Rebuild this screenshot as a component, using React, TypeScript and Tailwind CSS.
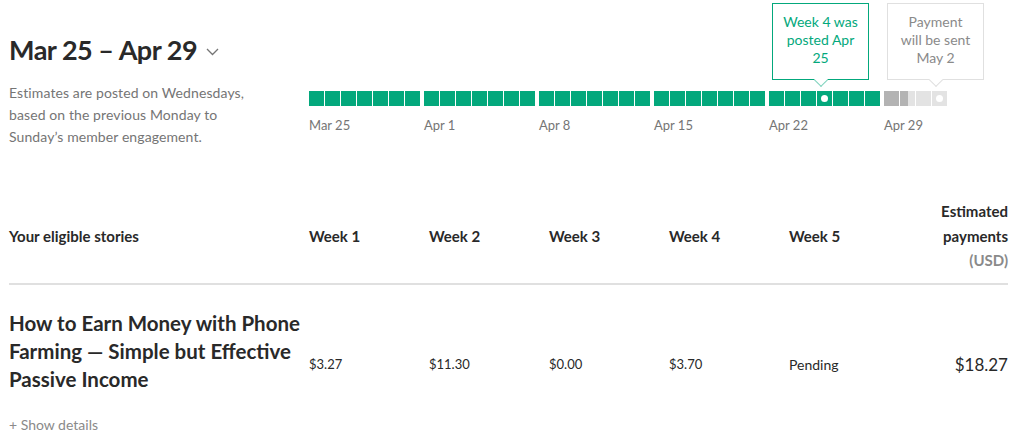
import React from "react";

const green = "bg-[#03a87c]";

type Square = { kind: "green" | "dark" | "half" | "light"; dot?: boolean };

const weeks: Square[][] = [
  Array.from({ length: 7 }, () => ({ kind: "green" as const })),
  Array.from({ length: 7 }, () => ({ kind: "green" as const })),
  Array.from({ length: 7 }, () => ({ kind: "green" as const })),
  Array.from({ length: 7 }, () => ({ kind: "green" as const })),
  Array.from({ length: 7 }, (_, i) => ({ kind: "green" as const, dot: i === 3 })),
  [
    { kind: "dark" },
    { kind: "half" },
    { kind: "light" },
    { kind: "light", dot: true },
  ],
];

const labels = ["Mar 25", "Apr 1", "Apr 8", "Apr 15", "Apr 22", "Apr 29"];

const Cell = ({ sq }: { sq: Square }) => {
  if (sq.kind === "half") {
    return (
      <div className="flex h-[15px] w-[15px]">
        <div className="w-[8px] bg-[#b3b3b3]" />
        <div className="flex-1 bg-[#e3e3e3]" />
      </div>
    );
  }
  return (
    <div
      className={
        "flex h-[15px] w-[15px] items-center justify-center " +
        (sq.kind === "green"
          ? green
          : sq.kind === "dark"
            ? "bg-[#b3b3b3]"
            : "bg-[#e3e3e3]")
      }
    >
      {sq.dot && <div className="h-[7px] w-[7px] rounded-full bg-white" />}
    </div>
  );
};

const Callout = ({
  children,
  tone,
  className,
}: {
  children: React.ReactNode;
  tone: "green" | "gray";
  className: string;
}) => (
  <div
    className={
      "absolute flex h-[77px] flex-col items-center justify-center border bg-white pb-[4px] text-center text-[14px] leading-[18px] " +
      (tone === "green"
        ? "border-[#03a87c] text-[#03a87c] "
        : "border-[#e0e0e0] text-[#8a8a8a] ") +
      className
    }
  >
    {children}
    <div
      className={
        "absolute bottom-[-6px] left-1/2 h-[10px] w-[10px] -translate-x-1/2 rotate-45 border-r border-b bg-white " +
        (tone === "green" ? "border-[#7fd3bd]" : "border-[#e0e0e0]")
      }
    />
  </div>
);

const cols = "grid grid-cols-[300px_120px_120px_120px_120px_120px_1fr]";

export default function App() {
  return (
    <div className="min-h-[441px] w-[1013px] bg-white pl-[9px] pr-[5px] font-['Lato',sans-serif] text-[#292929]">
      <div className="flex">
        <div className="w-[300px] pt-[33px]">
          <div className="flex items-center gap-[9px]">
            <h1 className="text-[27px] font-bold leading-[34px] tracking-[-0.5px]">
              Mar 25 – Apr 29
            </h1>
            <svg width="13" height="8" viewBox="0 0 13 8" className="mt-[4px]">
              <path d="M1 1l5.5 5.5L12 1" fill="none" stroke="#757575" strokeWidth="1.3" />
            </svg>
          </div>
          <p className="mt-[15px] w-[250px] text-[14px] leading-[22px] tracking-[0.1px] text-[#757575]">
            Estimates are posted on Wednesdays, based on the previous Monday to Sunday’s member
            engagement.
          </p>
        </div>
        <div className="relative pt-[91px]">
          <Callout tone="green" className="left-[463px] top-[3px] w-[97px]">
            <span>Week 4 was</span>
            <span>posted Apr</span>
            <span>25</span>
          </Callout>
          <Callout tone="gray" className="left-[578px] top-[3px] w-[97px]">
            <span>Payment</span>
            <span>will be sent</span>
            <span>May 2</span>
          </Callout>
          <div className="flex gap-[4px]">
            {weeks.map((w, i) => (
              <div key={i} className="flex w-[111px] flex-col">
                <div className="flex gap-[1px]">
                  {w.map((sq, j) => (
                    <Cell key={j} sq={sq} />
                  ))}
                </div>
                <div className="mt-[11px] text-[13px] leading-[16px] text-[#757575]">
                  {labels[i]}
                </div>
              </div>
            ))}
          </div>
        </div>
      </div>

      <div className={cols + " mt-[51px] items-center border-b-2 border-[#e0e0e0] pb-[10px] text-[15px] font-bold"}>
        <div>Your eligible stories</div>
        <div>Week 1</div>
        <div>Week 2</div>
        <div>Week 3</div>
        <div>Week 4</div>
        <div>Week 5</div>
        <div className="text-right leading-[24.5px]">
          Estimated
          <br />
          payments
          <br />
          <span className="text-[#8a8a8a]">(USD)</span>
        </div>
      </div>

      <div className={cols + " pt-[24px] text-[13px]"}>
        <div className="text-[20.5px] font-bold leading-[28px]">
          How to Earn Money with Phone Farming — Simple but Effective Passive Income
        </div>
        <div className="pt-[46px]">$3.27</div>
        <div className="pt-[46px]">$11.30</div>
        <div className="pt-[46px]">$0.00</div>
        <div className="pt-[46px]">$3.70</div>
        <div className="pt-[45px] text-[14px]">Pending</div>
        <div className="pt-[43px] text-right text-[17px]">$18.27</div>
      </div>
      <div className="mt-[23px] text-[14px] leading-[18px] text-[#8a8a8a]">+ Show details</div>
    </div>
  );
}
